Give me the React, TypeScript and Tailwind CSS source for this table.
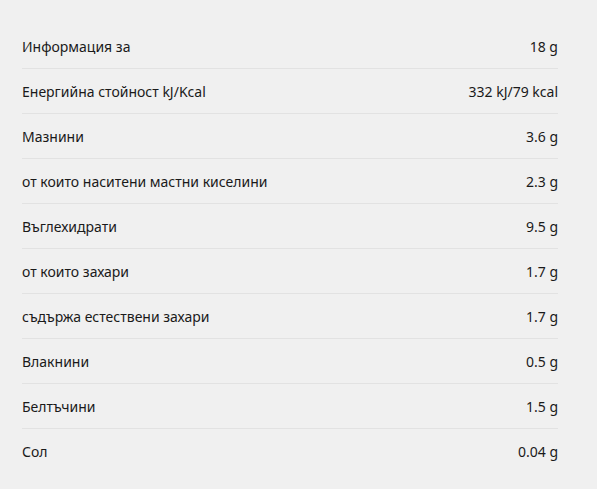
import React from 'react';

const rows: [string, string][] = [
  ['Информация за', '18 g'],
  ['Енергийна стойност kJ/Kcal', '332 kJ/79 kcal'],
  ['Мазнини', '3.6 g'],
  ['от които наситени мастни киселини', '2.3 g'],
  ['Въглехидрати', '9.5 g'],
  ['от които захари', '1.7 g'],
  ['съдържа естествени захари', '1.7 g'],
  ['Влакнини', '0.5 g'],
  ['Белтъчини', '1.5 g'],
  ['Сол', '0.04 g'],
];

export default function App() {
  return (
    <div
      lang="bg"
      className="min-h-[489px] w-[597px] bg-[#f0f0f0] pt-[24px] pl-[22px] pr-[39px] text-[14px] text-[#1a1a1a] font-['Noto_Sans',sans-serif]"
    >
      {rows.map(([label, value], i) => (
        <div
          key={label}
          className={`flex h-[45px] items-center justify-between ${
            i < rows.length - 1 ? 'border-b border-[#e2e2e2]' : ''
          }`}
        >
          <span>{label}</span>
          <span>{value}</span>
        </div>
      ))}
    </div>
  );
}
